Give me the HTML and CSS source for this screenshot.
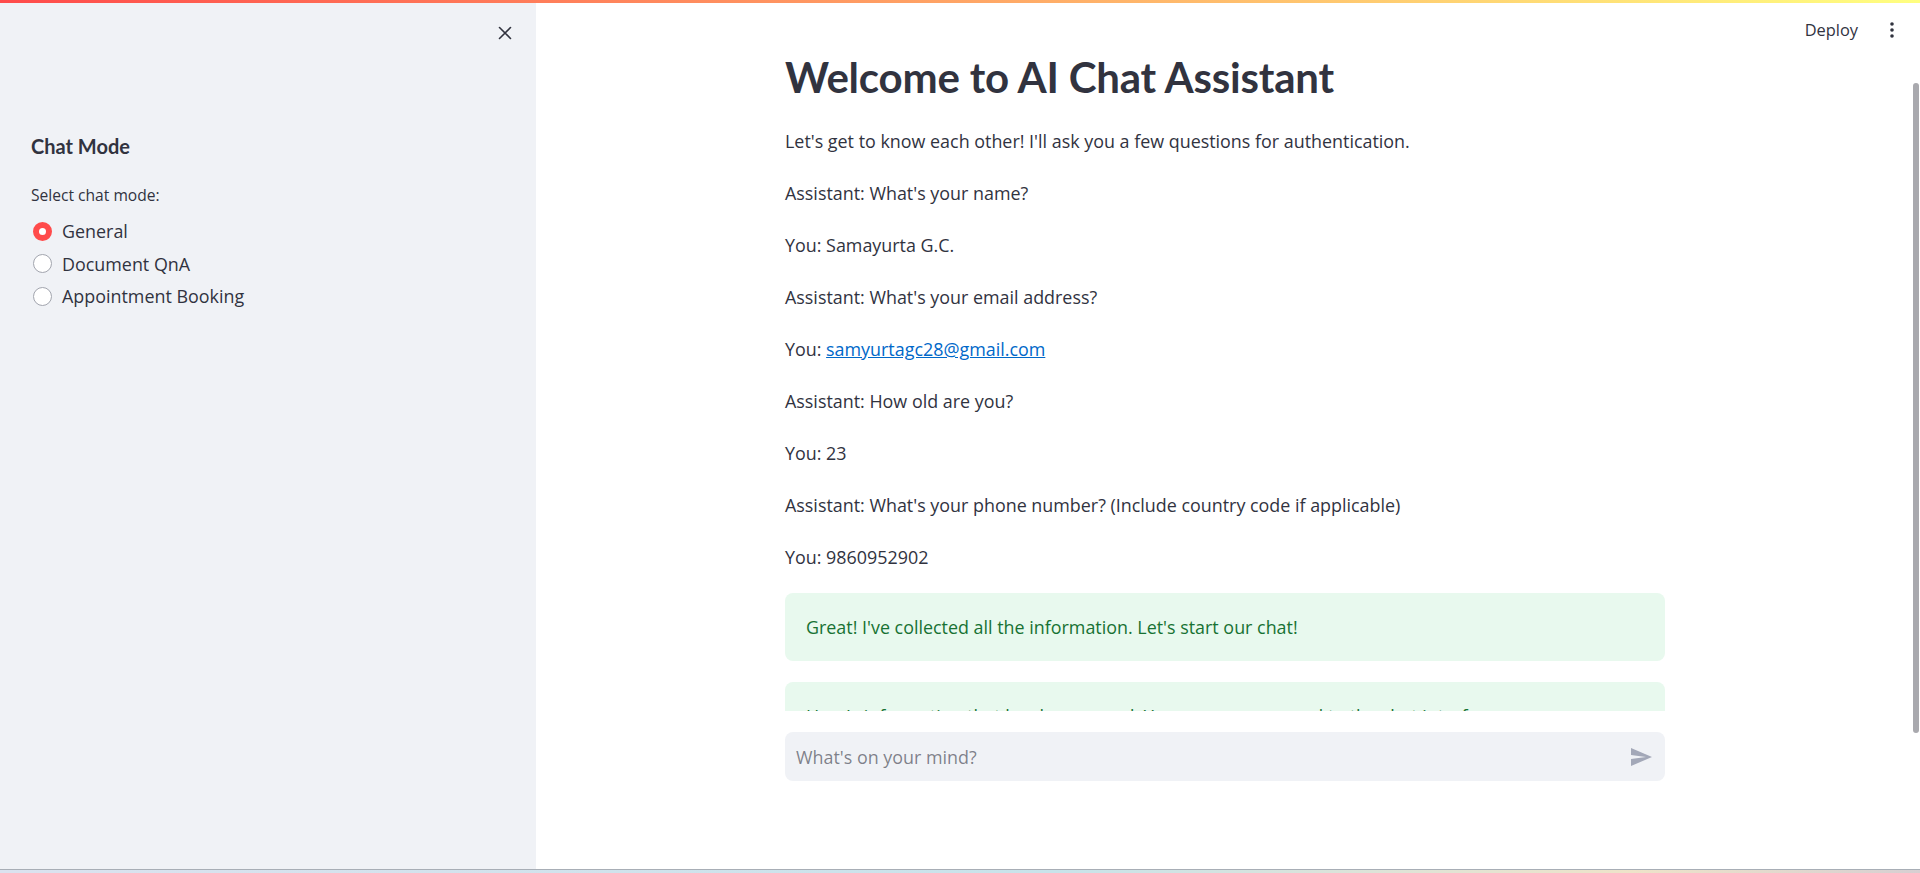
FILE: index.html
```html
<!DOCTYPE html>
<html lang="en">
<head>
<meta charset="utf-8">
<title>AI Chat Assistant</title>
<link rel="stylesheet" href="styles.css">
</head>
<body>
<div class="decoration"></div>
<div class="app">
  <aside class="sidebar">
    <div class="sidebar-head">
      <button class="close-btn" aria-label="Close sidebar">
        <svg width="16" height="16" viewBox="0 0 16 16"><path d="M2.5 2.5 L13.5 13.5 M13.5 2.5 L2.5 13.5" stroke="#31333f" stroke-width="1.6" stroke-linecap="round"/></svg>
      </button>
    </div>
    <div class="sidebar-body">
      <h3 class="side-title">Chat Mode</h3>
      <div class="radio-label">Select chat mode:</div>
      <div class="radio-group">
        <label class="radio-item"><span class="radio checked"></span><span>General</span></label>
        <label class="radio-item"><span class="radio"></span><span>Document QnA</span></label>
        <label class="radio-item"><span class="radio"></span><span>Appointment Booking</span></label>
      </div>
    </div>
  </aside>
  <main class="main">
    <div class="toolbar">
      <span class="deploy">Deploy</span>
      <svg class="menu" width="4" height="16" viewBox="0 0 4 16"><circle cx="2" cy="2" r="1.8" fill="#31333f"/><circle cx="2" cy="8" r="1.8" fill="#31333f"/><circle cx="2" cy="14" r="1.8" fill="#31333f"/></svg>
    </div>
    <div class="scroll">
      <div class="block">
        <h1 class="title">Welcome to AI Chat Assistant</h1>
        <div class="messages">
          <p>Let's get to know each other! I'll ask you a few questions for authentication.</p>
          <p>Assistant: What's your name?</p>
          <p>You: Samayurta G.C.</p>
          <p>Assistant: What's your email address?</p>
          <p>You: <a href="#">samyurtagc28@gmail.com</a></p>
          <p>Assistant: How old are you?</p>
          <p>You: 23</p>
          <p>Assistant: What's your phone number? (Include country code if applicable)</p>
          <p>You: 9860952902</p>
          <div class="alerts">
            <div class="alert">Great! I've collected all the information. Let's start our chat!</div>
            <div class="alert">Here's information that has been saved. You can now proceed to the chat interface.</div>
          </div>
        </div>
      </div>
    </div>
    <div class="dock">
      <div class="chat-input">
        <span class="placeholder">What's on your mind?</span>
        <svg class="send" width="24" height="24" viewBox="0 0 24 24"><path d="M2.01 21L23 12 2.01 3 2 10l15 2-15 2z" fill="#a3a8b8"/></svg>
      </div>
    </div>
    <div class="scrollbar"></div>
  </main>
</div>
<div class="bottom-strip"></div>
</body>
</html>
```

FILE: styles.css
```css
* { box-sizing: border-box; }
html, body { margin: 0; padding: 0; }
body {
  width: 1920px;
  height: 873px;
  overflow: hidden;
  font-family: "Open Sans", "Lato", sans-serif;
  color: #31333f;
  background: #ffffff;
  position: relative;
  display: flex;
  flex-direction: column;
}
.decoration {
  position: absolute;
  top: 0; left: 0; right: 0;
  height: 3px;
  background: linear-gradient(90deg, #ff4b4b, #ffff80);
  z-index: 10;
}
.app {
  display: flex;
  height: 869px;
  flex: none;
}
.sidebar {
  width: 536px;
  flex: none;
  background: #f0f2f6;
  display: flex;
  flex-direction: column;
}
.sidebar-head {
  display: flex;
  justify-content: flex-end;
  padding: 22px 20px 0 0;
}
.close-btn {
  width: 22px; height: 22px;
  border: none; background: none; padding: 0;
  display: flex; align-items: center; justify-content: center;
}
.sidebar-body {
  padding: 88px 24px 0 31px;
}
.side-title {
  margin: 0;
  font-family: "Lato", "Open Sans", sans-serif;
  font-size: 20px;
  font-weight: 700;
  line-height: 28px;
  height: 28px;
}
.radio-label {
  margin-top: 25px;
  font-size: 15.6px;
  line-height: 20px;
}
.radio-group {
  margin-top: 14px;
  display: flex;
  flex-direction: column;
  gap: 8px;
  margin-left: 2px;
}
.radio-item {
  display: flex;
  align-items: center;
  gap: 10px;
  font-size: 17.9px;
  line-height: 24px;
  height: 24.5px;
}
.radio {
  width: 19px; height: 19px;
  border-radius: 50%;
  background: #ffffff;
  border: 1.5px solid #a2a5ae;
  flex: none;
}
.radio.checked {
  background: #ff4b4b;
  border: 6px solid #ff4b4b;
  position: relative;
}
.radio.checked::after {
  content: "";
  position: absolute;
  left: 50%; top: 50%;
  width: 7px; height: 7px;
  margin: -3.5px 0 0 -3.5px;
  border-radius: 50%;
  background: #fff;
}
.main {
  flex: 1;
  position: relative;
  display: flex;
  flex-direction: column;
  background: #fff;
}
.toolbar {
  position: absolute;
  top: 18px;
  right: 26px;
  display: flex;
  align-items: center;
  gap: 32px;
  z-index: 5;
}
.deploy {
  font-size: 16.4px;
  line-height: 24px;
}
.scroll {
  height: 711px;
  flex: none;
  overflow: hidden;
}
.block {
  width: 880px;
  margin: 0 auto 0 249px;
  padding-top: 50px;
}
.title {
  margin: 0;
  font-family: "Lato", "Open Sans", sans-serif;
  font-size: 42px;
  font-weight: 700;
  line-height: 54px;
  letter-spacing: -0.2px;
}
.messages {
  margin-top: 24px;
  display: flex;
  flex-direction: column;
  gap: 26px;
}
.messages p {
  margin: 0;
  font-size: 17.9px;
  line-height: 26px;
}
.messages a {
  color: #0068c9;
  text-decoration: underline;
}
.alerts {
  margin-top: -3px;
  display: flex;
  flex-direction: column;
  gap: 21px;
}
.alert {
  background: #e8f9ee;
  color: #177233;
  border-radius: 8px;
  padding: 21px 21px;
  font-size: 17.9px;
  line-height: 26px;
}
.dock {
  padding-top: 21px;
}
.chat-input {
  width: 880px;
  margin-left: 249px;
  height: 49px;
  background: #f0f2f6;
  border-radius: 8px;
  display: flex;
  align-items: center;
  justify-content: space-between;
  padding: 0 12px 0 11px;
}
.placeholder {
  font-size: 17.9px;
  color: rgba(49, 51, 63, 0.6);
}
.send { display: block; }
.scrollbar {
  position: absolute;
  right: 1px;
  top: 83px;
  width: 6px;
  height: 650px;
  border-radius: 3px;
  background: #a9a9ae;
}
.bottom-strip {
  height: 4px;
  flex: none;
  border-top: 1px solid #a8aeb6;
  background: linear-gradient(90deg, #dbe2ef, #c8e3ea 55%, #eee3c9 85%, #d7cfd2);
}
```
